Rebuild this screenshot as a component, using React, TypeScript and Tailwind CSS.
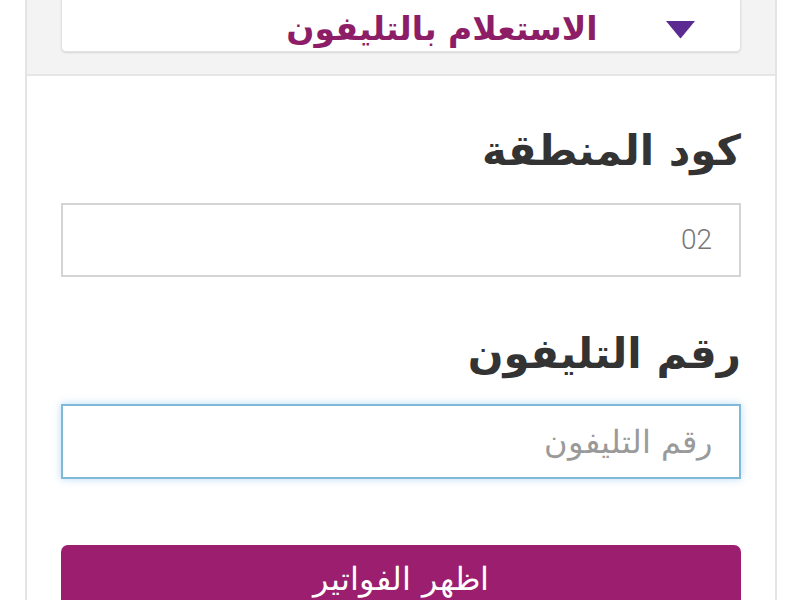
import React from "react";

const arabic = { fontFamily: '"DejaVu Sans", "Noto Sans", sans-serif' };

const App: React.FC = () => {
  return (
    <div dir="rtl" className="w-full h-[600px] bg-white overflow-hidden pl-[25px] pr-[23px]" style={arabic}>
      <div className="h-full border-x-2 border-[#e4e4e4]">
        {/* select header */}
        <div className="h-[76px] bg-[#f3f3f3] border-b-2 border-[#e6e6e6] px-[34px]">
          <div className="relative h-[52px] bg-white rounded-b-[5px] shadow-[0_1px_2px_rgba(0,0,0,0.12)] border-x border-b border-[#e2e2e2] flex items-end justify-center pl-[82px] pb-[6px]">
            <span className="text-[33px] leading-none font-bold text-[#8c1d66]">
              الاستعلام بالتليفون
            </span>
            <svg
              className="absolute left-[602px] top-[20px]"
              width="33"
              height="19"
              viewBox="0 0 33 19"
            >
              <path d="M2 1 L31 1 L17 18 Q16.5 18.6 16 18 Z" fill="#5b2b92" />
            </svg>
          </div>
        </div>

        {/* form body */}
        <div className="px-[34px] pt-[46px]">
          <label className="block text-[42px] leading-[58px] font-bold text-[#333]">
            كود المنطقة
          </label>
          <div className="mt-[23px] h-[74px] border-2 border-[#d4d4d4] flex items-center pr-[27px]">
            <span
              className="text-[28px] font-light text-[#777]"
              style={{ fontFamily: 'Roboto, "Liberation Sans", sans-serif' }}
            >
              02
            </span>
          </div>

          <label className="block mt-[48px] text-[42px] leading-[58px] font-bold text-[#333]">
            رقم التليفون
          </label>
          <div className="mt-[21px] h-[75px] border-2 border-[#80b8d8] shadow-[0_0_8px_rgba(102,175,233,0.45)] flex items-center pr-[27px]">
            <input
              className="w-full h-full bg-transparent outline-none text-[32px] font-extralight text-[#555] placeholder:text-[#9a9a9a]"
              placeholder="رقم التليفون"
              style={arabic}
            />
          </div>

          <button className="mt-[66px] w-full h-[80px] bg-[#9b1e6f] rounded-t-[7px] text-white text-[32px] font-light flex justify-center pt-[10px]">
            اظهر الفواتير
          </button>
        </div>
      </div>
    </div>
  );
};

export default App;
